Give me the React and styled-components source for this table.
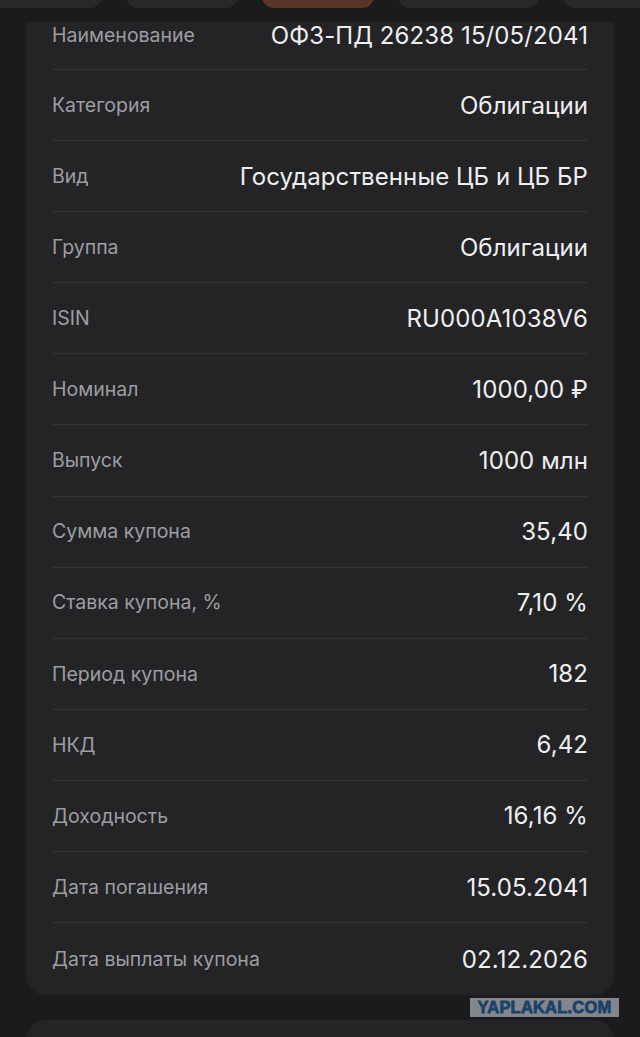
import { createGlobalStyle } from "styled-components";
import styled from "styled-components";

const rows = [
  ["Наименование", "ОФЗ-ПД 26238 15/05/2041"],
  ["Категория", "Облигации"],
  ["Вид", "Государственные ЦБ и ЦБ БР"],
  ["Группа", "Облигации"],
  ["ISIN", "RU000A1038V6"],
  ["Номинал", "1000,00 ₽"],
  ["Выпуск", "1000 млн"],
  ["Сумма купона", "35,40"],
  ["Ставка купона, %", "7,10 %"],
  ["Период купона", "182"],
  ["НКД", "6,42"],
  ["Доходность", "16,16 %"],
  ["Дата погашения", "15.05.2041"],
  ["Дата выплаты купона", "02.12.2026"],
];

const chips = [
  { width: 120 },
  { width: 112 },
  { width: 112, active: true },
  { width: 141 },
  { width: 120 },
];

function App() {
  return (
    <Page>
      <GlobalStyle />
      <Tabs>
        <ChipRow>
          {chips.map((c, i) => (
            <Chip key={i} $width={c.width} $active={c.active} />
          ))}
        </ChipRow>
      </Tabs>
      <Scroller>
        <Card>
          {rows.map(([label, value], i) => (
            <Row
              key={label}
              $first={i === 0}
              $last={i === rows.length - 1}
            >
              <Label>{label}</Label>
              <Value>{value}</Value>
            </Row>
          ))}
        </Card>
        <NextCard />
      </Scroller>
      <Watermark>YAPLAKAL.COM</Watermark>
    </Page>
  );
}

const GlobalStyle = createGlobalStyle`
  html, body {
    margin: 0;
    padding: 0;
    background: #1b1b1d;
  }
  body {
    font-family: Inter, "Noto Sans", sans-serif;
    -webkit-font-smoothing: antialiased;
  }
`;

const Page = styled.div`
  position: relative;
  width: 640px;
  height: 1037px;
  overflow: hidden;
  background: #1b1b1d;
  display: flex;
  flex-direction: column;
`;

const Tabs = styled.div`
  height: 22px;
  flex-shrink: 0;
  overflow: hidden;
`;

const ChipRow = styled.div`
  display: flex;
  gap: 24px;
  margin-left: -18px;
  margin-top: -32px;
`;

const Chip = styled.div`
  flex-shrink: 0;
  width: ${(p) => p.$width}px;
  height: 40px;
  border-radius: 12px;
  background: ${(p) => (p.$active ? "#5a3525" : "#28282b")};
`;

const Scroller = styled.div`
  flex: 1;
  display: flex;
  flex-direction: column;
  gap: 25px;
  padding: 0 26px;
`;

/* card is scrolled under the tab strip, so its top corners are hidden */
const Card = styled.div`
  background: #242427;
  border-radius: 0 0 20px 20px;
  padding: 0 26px;
`;

const Row = styled.div`
  display: flex;
  align-items: center;
  justify-content: space-between;
  height: ${(p) => (p.$first ? "27px" : p.$last ? "71px" : "69.1px")};
  padding-top: ${(p) => (p.$first ? "0" : "1px")};
  padding-bottom: ${(p) => (p.$first ? "20px" : "0")};
  border-bottom: ${(p) => (p.$last ? "none" : "1px solid #333336")};
`;

const Label = styled.span`
  font-size: 19.5px;
  line-height: 1;
  color: #9d9da2;
`;

const Value = styled.span`
  font-size: 24px;
  line-height: 1;
  color: #efeff1;
  font-weight: 400;
  letter-spacing: 0.1px;
`;

const NextCard = styled.div`
  flex-shrink: 0;
  height: 80px;
  background: #242427;
  border-radius: 20px;
`;

const Watermark = styled.div`
  position: absolute;
  left: 470px;
  top: 998px;
  width: 149px;
  height: 19px;
  background: #83878c;
  color: #1b4268;
  font-family: "Liberation Sans", Arial, sans-serif;
  font-weight: 900;
  font-size: 16.5px;
  line-height: 19px;
  text-align: center;
  letter-spacing: 0.2px;
  -webkit-text-stroke: 0.8px #1b4268;
`;

export default App;
